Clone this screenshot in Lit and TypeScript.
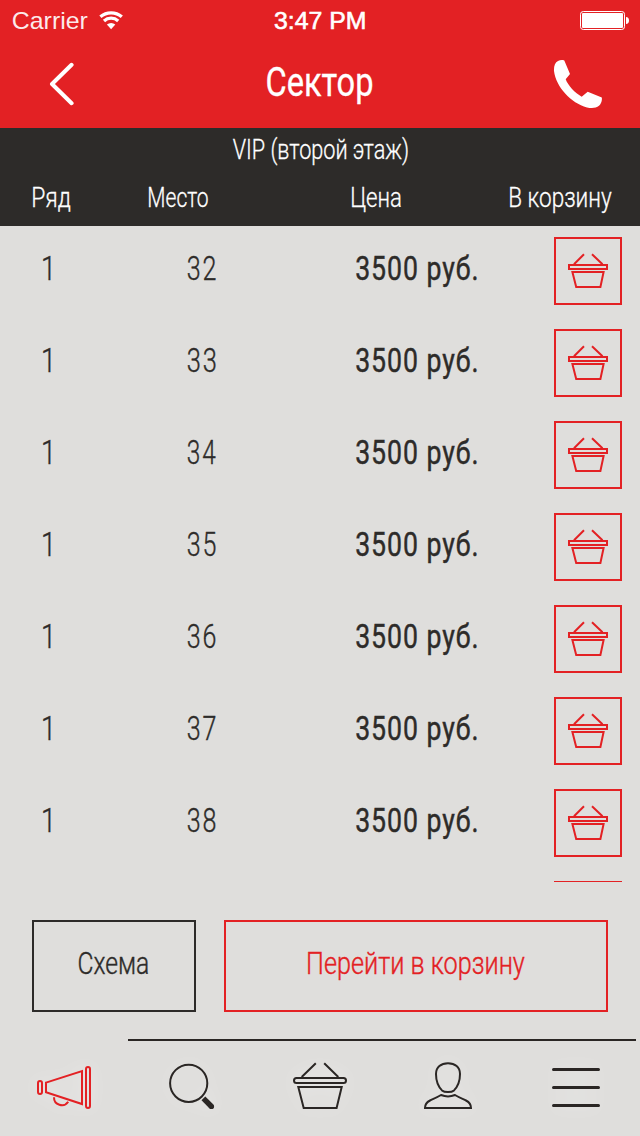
import { LitElement, html, css, svg } from "lit";
import { customElement, property } from "lit/decorators.js";
import { styleMap } from "lit/directives/style-map.js";

/** Single-line label condensed so that its ink fills exactly `w` pixels. */
@customElement("narrow-text")
class NarrowText extends LitElement {
  @property() text = "";
  @property({ type: Number }) w = 0;
  private scale = 1;
  private shift = 0;

  static styles = css`
    :host { display: block; white-space: nowrap; flex: none; }
    .box { display: block; }
    .ink { display: inline-block; transform-origin: 0 50%; }
  `;

  willUpdate() {
    const cs = getComputedStyle(this);
    const size = parseFloat(cs.fontSize);
    const ctx = document.createElement("canvas").getContext("2d")!;
    // Measured ten times larger to avoid whole-pixel rounding of the bounds.
    ctx.font = `${cs.fontWeight} ${size * 10}px ${cs.fontFamily}`;
    const m = ctx.measureText(this.text);
    const spacing = (parseFloat(cs.letterSpacing) || 0) * (this.text.length - 1);
    const ink = (m.actualBoundingBoxLeft + m.actualBoundingBoxRight) / 10 + spacing;
    this.scale = ink > 0 ? this.w / ink : 1;
    this.shift = (m.actualBoundingBoxLeft / 10) * this.scale;
  }

  render() {
    const box = { width: `${this.w}px` };
    const ink = { transform: `translateX(${this.shift}px) scaleX(${this.scale})` };
    return html`<span class="box" style=${styleMap(box)}><span class="ink" style=${styleMap(ink)}>${this.text}</span></span>`;
  }
}

const cartIcon = svg`
  <rect x="13" y="26" width="38" height="4"/>
  <path d="M16.4 33H47.6L44.4 48H20.2Z"/>
  <path d="M28 15.2L18 25.3M36 15.2L46.5 25.3"/>`;

const navIcons = [
  svg`<g class="active">
    <rect x="38" y="41" width="4" height="13" rx="2"/>
    <path d="M46 42.6L82 31V64L46 52.2Z"/>
    <rect x="86" y="27" width="4" height="41" rx="2"/>
    <path d="M54 57.2A7.8 7.8 0 0 0 68.2 61.8"/></g>`,
  svg`<circle cx="60.7" cy="43.3" r="18.6"/><path class="handle" d="M75.4 58.4L83 66"/><circle class="solid" cx="83.4" cy="66.4" r="2.7"/>`,
  svg`<rect x="38" y="38" width="52" height="5" rx="2.5"/>
    <path d="M42.3 47H85.7L80.6 68H47.7Z"/>
    <path d="M59.8 23.2L45.7 37M68.2 23.2L82.3 37"/>`,
  svg`<path d="M64 23.2C71 23.2 76 27 76 34C76 41 72.8 47.5 70 50.4C67.5 52.6 60.5 52.6 58 50.4C55.2 47.5 52 41 52 34C52 27 57 23.2 64 23.2Z"/>
    <path d="M57 55C61 56.6 67 56.6 71 55C76 58 79 59 82 60.5C85.5 62.3 87 64 87 68H41C41 64 42.5 62.3 46 60.5C49 59 52 58 57 55Z"/>`,
  svg`<path class="bars" d="M41.5 29.5H86.5M41.5 47.5H86.5M41.5 65.5H86.5"/>`,
];

@customElement("app-root")
class AppRoot extends LitElement {
  seats = [32, 33, 34, 35, 36, 37, 38];

  static styles = css`
    :host {
      display: flex; flex-direction: column; width: 640px; height: 1136px;
      overflow: hidden; background: #dfdedc; color: #2d2b29;
      font-family: Roboto, "Liberation Sans", sans-serif;
    }
    svg { display: block; flex: none; }
    .top { background: #e32124; color: #fff; height: 128px; flex: none; }
    .status {
      height: 40px; display: flex;
      font: 24px/41px "Liberation Sans", sans-serif;
    }
    .left { display: flex; padding-left: 12.7px; width: 274.5px; box-sizing: border-box; gap: 11.5px; flex: none; }
    .carrier { color: #ffffffe8; }
    .time { -webkit-text-stroke: 0.6px #fff; }
    .battery { margin-left: auto; }
    .bar { height: 88px; display: flex; }
    .title { font-size: 41px; line-height: 84px; margin: 0 181px 0 191px; font-weight: 400; -webkit-text-stroke: 0.3px #fff; }
    .back { margin: 22px 0 0 48px; fill: none; stroke: #fff; stroke-width: 4; stroke-linecap: round; stroke-linejoin: round; }
    .phone { margin-top: 20px; fill: #fff; }
    .head {
      background: #2d2b29; color: #fff; height: 98px; flex: none;
      font-size: 27px; font-weight: 300; -webkit-text-stroke: 0.3px;
    }
    .sector { display: flex; justify-content: center; line-height: 44px; height: 49px; }
    .cols { display: grid; grid-template-columns: 116px 202.5px 158px 1fr; padding-left: 33px; line-height: 42px; }
    .list { height: 656px; flex: none; overflow: hidden; }
    .row {
      height: 92px; display: grid; grid-template-columns: 145.6px 168px 197.7px 68px;
      padding-left: 42.7px; font-size: 34px; line-height: 85px; font-weight: 300;
      letter-spacing: 2.5px; -webkit-text-stroke: 0.4px;
    }
    .price { font-weight: 400; letter-spacing: 1.2px; -webkit-text-stroke: 0.45px; }
    .buy {
      width: 68px; height: 68px; box-sizing: border-box; border: 2px solid #e32124;
      margin-top: 11px; grid-column: 4; fill: none; stroke: #e32124; stroke-width: 2;
    }
    .actions {
      display: flex; gap: 28px; padding: 38px 32px 0; height: 157px; box-sizing: border-box;
      flex: none; font-size: 31px; font-weight: 300; -webkit-text-stroke: 0.4px;
    }
    .btn {
      height: 92px; box-sizing: border-box; border: 2px solid; display: flex;
      justify-content: center; line-height: 83px; width: 164px; padding-right: 2px;
    }
    .btn.go { flex: 1; color: #e32124; padding: 0; }
    .tabs { flex: none; }
    .rule { height: 2px; background: #2a2624; margin: 0 4px 0 128px; }
    .icons { display: flex; margin-top: -1px; fill: none; stroke: #2a2624; stroke-width: 2; }
    .icons svg { filter: drop-shadow(0 0 9px rgba(255, 255, 255, 0.55)); }
    .active { stroke: #e32124; }
    .handle { stroke-width: 5.4; }
    .solid { fill: #2a2624; stroke: none; }
    .bars { stroke-width: 3; stroke-linecap: round; }
  `;

  render() {
    return html`
      <div class="top">
        <div class="status">
          <div class="left">
            <narrow-text class="carrier" text="Carrier" w="74.5"></narrow-text>
            <svg width="26" height="40" viewBox="0 0 26 40" fill="none" stroke="#fff" stroke-width="3.3">
              <path d="M1.4 16.8A16.3 16.3 0 0 1 22.8 16.8M5 20.9A10.7 10.7 0 0 1 19.2 20.9"/>
              <path fill="#fff" stroke="none" d="M12.1 29.2L7.9 24.6A6.3 6.3 0 0 1 16.3 24.6Z"/>
            </svg>
          </div>
          <narrow-text class="time" text="3:47 PM" w="89.5"></narrow-text>
          <svg class="battery" width="62" height="40" viewBox="0 0 62 40">
            <rect x="2.5" y="11.5" width="44" height="18" rx="2.8" fill="none" stroke="#fff"/>
            <rect x="4" y="13" width="41" height="15" rx="1" fill="#fff"/>
            <path d="M48 17C50 17 51 18.5 51 20.5S50 24 48 24Z" fill="#fff"/>
          </svg>
        </div>
        <div class="bar">
          <svg class="back" width="28" height="44" viewBox="0 0 28 44"><path d="M23.6 2.8L4 22L23.6 41.2"/></svg>
          <narrow-text class="title" text="Сектор" w="105"></narrow-text>
          <svg class="phone" width="49" height="49" viewBox="-1 0 49 49">
            <path d="M10.3.4L16 14L11.7 19.3C14 25.5 21 33 27.7 36.7L33.7 31.7L47.8 37.6C48.3 41 47 44 45 45.8C42 48.5 37 48.3 33 47.5C17 43 2 27 0 11C-.3 6 1 2.5 4 1C6 0 8-.2 10.3.4Z"/>
          </svg>
        </div>
      </div>
      <div class="head">
        <div class="sector"><narrow-text text="VIP (второй этаж)" w="174.7"></narrow-text></div>
        <div class="cols">
          <narrow-text text="Ряд" w="37.3"></narrow-text>
          <narrow-text text="Место" w="59"></narrow-text>
          <narrow-text text="Цена" w="48.8"></narrow-text>
          <narrow-text text="В корзину" w="101.5"></narrow-text>
        </div>
      </div>
      <div class="list">
        ${this.seats.map((n) => html`
          <div class="row">
            <narrow-text text="1" w="7.2"></narrow-text>
            <narrow-text text=${String(n)} w="27.5"></narrow-text>
            <narrow-text class="price" text="3500 руб." w="120.5"></narrow-text>
            <div class="buy"><svg width="64" height="64">${cartIcon}</svg></div>
          </div>`)}
        <div class="row"><div class="buy"></div></div>
      </div>
      <div class="actions">
        <div class="btn"><narrow-text text="Схема" w="69"></narrow-text></div>
        <div class="btn go"><narrow-text text="Перейти в корзину" w="216.7"></narrow-text></div>
      </div>
      <div class="tabs">
        <div class="rule"></div>
        <div class="icons">${navIcons.map((i) => html`<svg width="128" height="96" viewBox="0 0 128 96">${i}</svg>`)}</div>
      </div>`;
  }
}
